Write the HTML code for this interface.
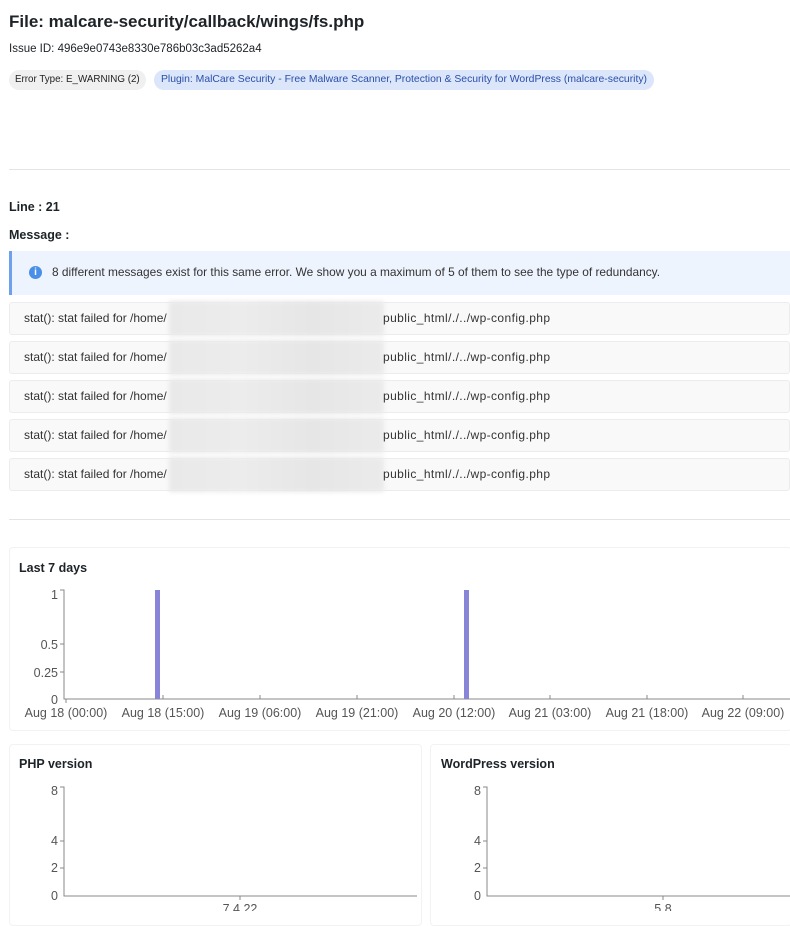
<!DOCTYPE html>
<html><head><meta charset="utf-8"><style>
body{margin:0;width:790px;height:911px;overflow:hidden;background:#fff;font-family:"Liberation Sans",sans-serif;color:#1d2327;position:relative}
.a{position:absolute;white-space:nowrap}
.badge{position:absolute;top:70px;height:20px;line-height:20px;font-size:10.4px;border-radius:10px;padding:0 7px}
.hr{position:absolute;left:9px;right:0;height:1px;background:#e4e4e4}
.row{position:absolute;left:9px;right:0;height:31px;border:1px solid #ececec;border-radius:3px;background:#f9f9f9;font-size:12px;line-height:31px;color:#333}
.row span{position:absolute;left:14px}
.row b{position:absolute;left:373px;font-weight:normal;letter-spacing:0.4px}
.blur{position:absolute;left:159px;width:215px;top:-2px;bottom:-2px;background:linear-gradient(90deg,#e9e9e9,#ececec,#e6e6e6,#ebebeb);filter:blur(2px)}
.card{position:absolute;border:1px solid #f2f2f2;border-radius:4px;background:#fff}
.t{font-weight:bold;font-size:12.5px}
svg text{font-family:"Liberation Sans",sans-serif;fill:#555}
</style></head><body>
<div class="a" style="left:9px;top:12px;font-size:17px;font-weight:bold">File: malcare-security/callback/wings/fs.php</div>
<div class="a" style="left:9px;top:43px;font-size:11.5px">Issue ID: 496e9e0743e8330e786b03c3ad5262a4</div>
<div class="badge" style="left:9px;background:#f0f0f0;color:#222;font-size:9.8px;padding:0 6px">Error Type: E_WARNING (2)</div>
<div class="badge" style="left:154px;background:#dbe6fb;color:#2b4fa8">Plugin: MalCare Security - Free Malware Scanner, Protection &amp; Security for WordPress (malcare-security)</div>
<div class="hr" style="top:169px"></div>
<div class="a t" style="left:9px;top:200px">Line : 21</div>
<div class="a t" style="left:9px;top:228px">Message :</div>
<div class="a" style="left:9px;right:0;top:251px;height:44px;background:#eef4fd;border-left:3px solid #6ea0ec"></div>
<div class="a" style="left:29px;top:266px;width:13px;height:13px;border-radius:50%;background:#4a8fe7;color:#fff;font-size:10px;font-weight:bold;text-align:center;line-height:13px">i</div>
<div class="a" style="left:52px;top:265px;font-size:11.9px;color:#333">8 different messages exist for this same error. We show you a maximum of 5 of them to see the type of redundancy.</div>
<div class="row" style="top:302px"><span>stat(): stat failed for /home/</span><div class="blur"></div><b>public_html/./../wp-config.php</b></div>
<div class="row" style="top:341px"><span>stat(): stat failed for /home/</span><div class="blur"></div><b>public_html/./../wp-config.php</b></div>
<div class="row" style="top:380px"><span>stat(): stat failed for /home/</span><div class="blur"></div><b>public_html/./../wp-config.php</b></div>
<div class="row" style="top:419px"><span>stat(): stat failed for /home/</span><div class="blur"></div><b>public_html/./../wp-config.php</b></div>
<div class="row" style="top:458px"><span>stat(): stat failed for /home/</span><div class="blur"></div><b>public_html/./../wp-config.php</b></div>
<div class="hr" style="top:519px"></div>
<div class="card" style="left:9px;right:-2px;top:547px;height:182px"></div>
<div class="a t" style="left:19px;top:561px">Last 7 days</div>
<svg class="a" style="left:0;top:580px" width="790" height="150">
<g stroke="#888" fill="none"><path d="M60 10H64V119H790"/><path d="M60 64H64M60 92H64"/>
<path d="M66 119v4M163 119v-4M260 119v-4M357 119v-4M454 119v-4M550 119v-4M647 119v-4M743 119v-4"/></g>
<rect x="155" y="10" width="5" height="109" fill="#8884d8"/><rect x="464" y="10" width="5" height="109" fill="#8884d8"/>
<g font-size="12.5" text-anchor="end"><text x="58" y="19">1</text><text x="58" y="69">0.5</text><text x="58" y="97">0.25</text><text x="58" y="124">0</text></g>
<g font-size="12.5" text-anchor="middle"><text x="66" y="137">Aug 18 (00:00)</text><text x="163" y="137">Aug 18 (15:00)</text><text x="260" y="137">Aug 19 (06:00)</text><text x="357" y="137">Aug 19 (21:00)</text><text x="454" y="137">Aug 20 (12:00)</text><text x="550" y="137">Aug 21 (03:00)</text><text x="647" y="137">Aug 21 (18:00)</text><text x="743" y="137">Aug 22 (09:00)</text></g>
</svg>
<div class="card" style="left:9px;width:411px;top:744px;height:180px"></div>
<div class="card" style="left:430px;right:-2px;top:744px;height:180px"></div>
<div class="a t" style="left:19px;top:757px">PHP version</div>
<div class="a t" style="left:441px;top:757px">WordPress version</div>
<svg class="a" style="left:0;top:780px" width="790" height="131">
<g stroke="#888" fill="none"><path d="M60 7H64V116H417M60 61H64M60 88H64M240 116v4"/><path d="M483 7H487V116H790M483 61H487M483 88H487M663 116v4"/></g>
<g font-size="12.5" text-anchor="end"><text x="58" y="15">8</text><text x="58" y="65">4</text><text x="58" y="92">2</text><text x="58" y="120">0</text>
<text x="481" y="15">8</text><text x="481" y="65">4</text><text x="481" y="92">2</text><text x="481" y="120">0</text></g>
<g font-size="12.5" text-anchor="middle"><text x="240" y="133">7.4.22</text><text x="663" y="133">5.8</text></g>
</svg>
</body></html>
